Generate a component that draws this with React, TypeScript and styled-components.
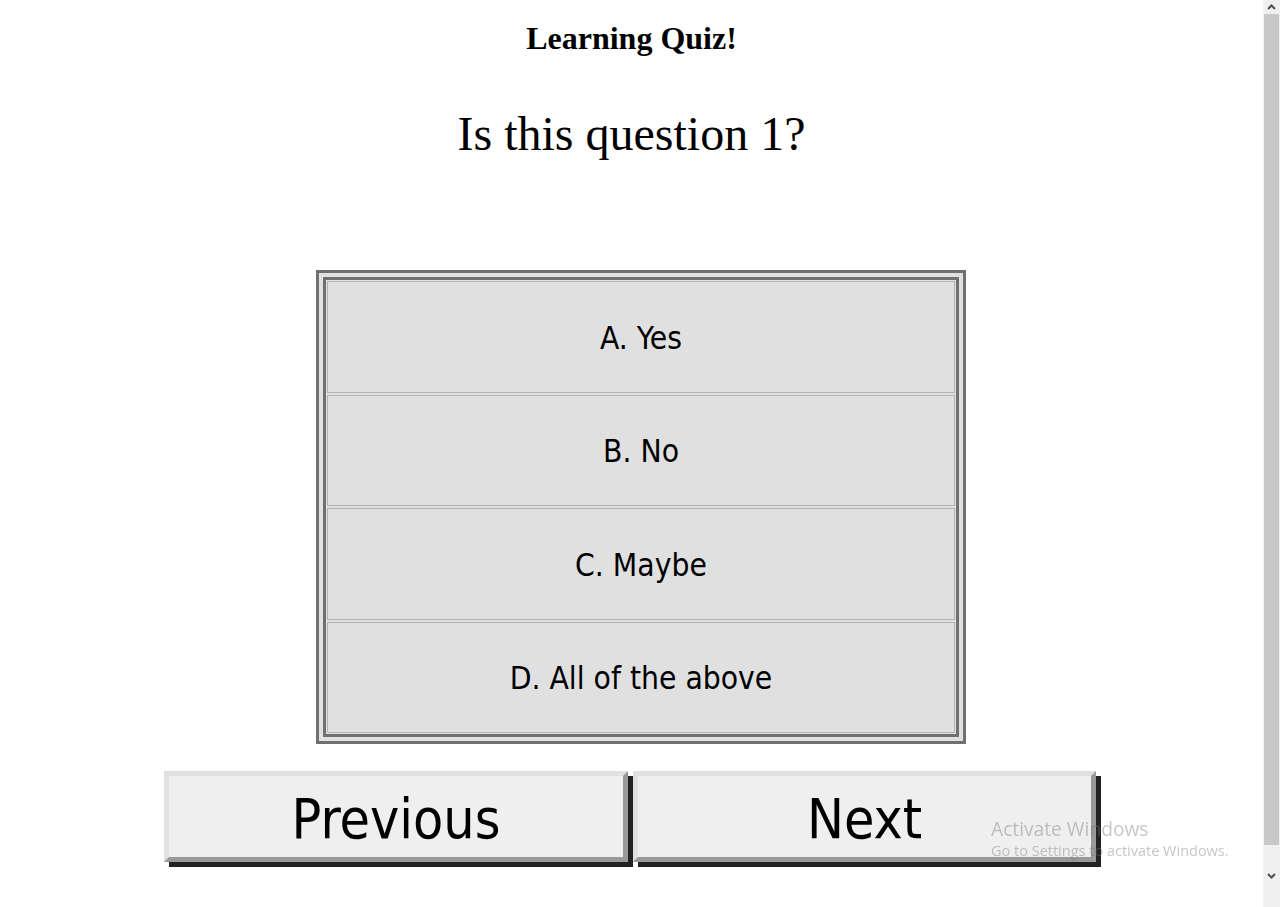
import React from "react";
import styled, { createGlobalStyle } from "styled-components";

const GlobalStyle = createGlobalStyle`
  html {
    overflow: hidden;
  }
  html, body {
    margin: 0;
    padding: 0;
    background: #ffffff;
  }
  body {
    font-family: "Liberation Serif", "Times New Roman", serif;
    color: #000;
  }
`;

const Page = styled.main`
  width: 1263px;
  min-height: 907px;
  display: flex;
  flex-direction: column;
  align-items: flex-start;
`;

const Title = styled.h1`
  align-self: stretch;
  margin: 20px 0 0;
  font-family: "Liberation Serif", "Times New Roman", serif;
  font-size: 32px;
  font-weight: bold;
  line-height: normal;
  text-align: center;
`;

const Question = styled.p`
  align-self: stretch;
  margin: 49px 0 0;
  font-family: "Liberation Serif", "Times New Roman", serif;
  font-size: 48px;
  line-height: normal;
  text-align: center;
`;

const AnswerTable = styled.div`
  margin: 109px 0 0 316px;
  width: 650px;
  box-sizing: border-box;
  border: 3px solid #707070;
  padding: 4px;
  background: #e0e0e0;
`;

const AnswerInner = styled.div`
  border: 3px solid #707070;
  padding: 1px;
  background: #e0e0e0;
  display: grid;
  grid-template-rows: repeat(4, 111.5px);
  row-gap: 2px;
`;

const AnswerCell = styled.button`
  display: flex;
  align-items: center;
  justify-content: center;
  border: 1px solid #b4b4b4;
  background: #e0e0e0;
  margin: 0;
  padding: 2px 0 0;
  font-family: "DejaVu Sans Condensed", "DejaVu Sans", sans-serif;
  font-size: 31.5px;
  color: #000;
  cursor: pointer;
`;

const NavRow = styled.div`
  margin: 27px 0 0 164px;
  display: flex;
  gap: 5px;
`;

const NavButton = styled.button<{ $w: number }>`
  width: ${(p) => p.$w}px;
  height: 91px;
  box-sizing: border-box;
  border-style: solid;
  border-width: 5px;
  border-color: #e0e0e0 #999999 #999999 #e0e0e0;
  background: #efefef;
  box-shadow: 5px 5px 0 #222222;
  margin: 0;
  padding: 5px 0 0;
  font-family: "DejaVu Sans Condensed", "DejaVu Sans", sans-serif;
  font-size: 55px;
  color: #000;
  line-height: 1;
  cursor: pointer;
`;

const Watermark = styled.div`
  position: fixed;
  left: 991px;
  top: 816px;
  font-family: "Open Sans", "Noto Sans", sans-serif;
  color: rgba(120, 120, 120, 0.42);
  pointer-events: none;
`;

const WatermarkTitle = styled.div`
  font-size: 19.2px;
  line-height: 26px;
`;

const WatermarkSub = styled.div`
  font-size: 14.5px;
  line-height: 18px;
`;

const Scrollbar = styled.div`
  position: fixed;
  top: 0;
  right: 0;
  width: 17px;
  height: 907px;
  background: #f0f0f0;
  display: flex;
  flex-direction: column;
  align-items: center;
`;

const ScrollArrow = styled.div`
  height: 14px;
  width: 17px;
  display: flex;
  align-items: center;
  justify-content: center;
`;

const ScrollThumb = styled.div`
  width: 15px;
  height: 831px;
  background: #c8c8c8;
`;

const ScrollSpacer = styled.div`
  flex: 1;
`;

const Chevron = ({ up }: { up?: boolean }) => (
  <svg width="9" height="6" viewBox="0 0 9 6">
    <polyline
      points={up ? "1,5 4.5,1.5 8,5" : "1,1 4.5,4.5 8,1"}
      fill="none"
      stroke="#505050"
      strokeWidth="2"
    />
  </svg>
);

const answers = ["A. Yes", "B. No", "C. Maybe", "D. All of the above"];

export default function App() {
  return (
    <>
      <GlobalStyle />
      <Page>
        <Title>Learning Quiz!</Title>
        <Question>Is this question 1?</Question>
        <AnswerTable>
          <AnswerInner>
            {answers.map((a) => (
              <AnswerCell key={a}>{a}</AnswerCell>
            ))}
          </AnswerInner>
        </AnswerTable>
        <NavRow>
          <NavButton $w={464}>Previous</NavButton>
          <NavButton $w={463}>Next</NavButton>
        </NavRow>
      </Page>
      <Watermark>
        <WatermarkTitle>Activate Windows</WatermarkTitle>
        <WatermarkSub>Go to Settings to activate Windows.</WatermarkSub>
      </Watermark>
      <Scrollbar>
        <ScrollArrow>
          <Chevron up />
        </ScrollArrow>
        <ScrollThumb />
        <ScrollSpacer />
        <ScrollArrow>
          <Chevron />
        </ScrollArrow>
        <ScrollSpacer />
      </Scrollbar>
    </>
  );
}
